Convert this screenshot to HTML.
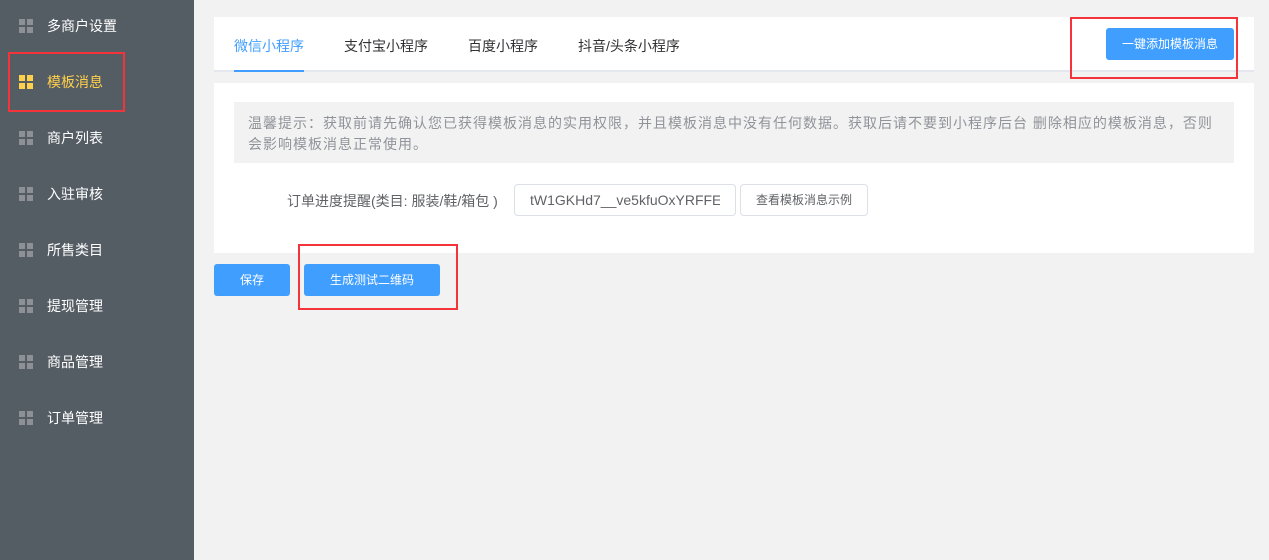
<!DOCTYPE html>
<html><head><meta charset="utf-8"><style>
*{margin:0;padding:0;box-sizing:border-box}
body{width:1269px;height:560px;background:#f2f2f2;font-family:"Liberation Sans","Noto Sans CJK SC",sans-serif;font-size:14px;position:relative;overflow:hidden}
.side{position:absolute;left:0;top:0;width:194px;height:560px;background:#545c64}
.item{position:absolute;left:0;width:194px;height:56px;color:#fff;font-size:14px;line-height:56px;padding-left:47px}
.ic{position:absolute;left:19px;top:21px;width:14px;height:14px}
.ic i{position:absolute;width:6px;height:6px;background:#8d9197}
.item.on{color:#ffd04b}.item.on .ic i{background:#ffd04b}
.a{position:absolute;white-space:nowrap}
.red{position:absolute;border:2px solid #f5333a}
.btn{position:absolute;background:#409eff;color:#fff;border-radius:3px;text-align:center;font-size:12px}
</style></head><body>
<div class="side">
<div class="item" style="top:-2px"><span class="ic"><i style="left:0;top:0"></i><i style="left:8px;top:0"></i><i style="left:0;top:8px"></i><i style="left:8px;top:8px"></i></span>多商户设置</div>
<div class="item on" style="top:54px"><span class="ic"><i style="left:0;top:0"></i><i style="left:8px;top:0"></i><i style="left:0;top:8px"></i><i style="left:8px;top:8px"></i></span>模板消息</div>
<div class="item" style="top:110px"><span class="ic"><i style="left:0;top:0"></i><i style="left:8px;top:0"></i><i style="left:0;top:8px"></i><i style="left:8px;top:8px"></i></span>商户列表</div>
<div class="item" style="top:166px"><span class="ic"><i style="left:0;top:0"></i><i style="left:8px;top:0"></i><i style="left:0;top:8px"></i><i style="left:8px;top:8px"></i></span>入驻审核</div>
<div class="item" style="top:222px"><span class="ic"><i style="left:0;top:0"></i><i style="left:8px;top:0"></i><i style="left:0;top:8px"></i><i style="left:8px;top:8px"></i></span>所售类目</div>
<div class="item" style="top:278px"><span class="ic"><i style="left:0;top:0"></i><i style="left:8px;top:0"></i><i style="left:0;top:8px"></i><i style="left:8px;top:8px"></i></span>提现管理</div>
<div class="item" style="top:334px"><span class="ic"><i style="left:0;top:0"></i><i style="left:8px;top:0"></i><i style="left:0;top:8px"></i><i style="left:8px;top:8px"></i></span>商品管理</div>
<div class="item" style="top:390px"><span class="ic"><i style="left:0;top:0"></i><i style="left:8px;top:0"></i><i style="left:0;top:8px"></i><i style="left:8px;top:8px"></i></span>订单管理</div>
</div>
<div class="red" style="left:8px;top:52px;width:117px;height:60px"></div>

<div class="a" style="left:214px;top:17px;width:1040px;height:55px;background:#fff;border-bottom:2px solid #e4e7ed"></div>
<div class="a" style="left:234px;top:36px;color:#409eff">微信小程序</div>
<div class="a" style="left:234px;top:70px;width:70px;height:2px;background:#409eff"></div>
<div class="a" style="left:344px;top:36px;color:#303133">支付宝小程序</div>
<div class="a" style="left:468px;top:36px;color:#303133">百度小程序</div>
<div class="a" style="left:578px;top:36px;color:#303133">抖音/头条小程序</div>
<div class="btn" style="left:1106px;top:28px;width:128px;height:32px;line-height:32px">一键添加模板消息</div>
<div class="red" style="left:1070px;top:17px;width:168px;height:62px"></div>

<div class="a" style="left:214px;top:83px;width:1040px;height:170px;background:#fff"></div>
<div class="a" style="left:234px;top:102px;width:1000px;height:61px;background:#f2f2f2;color:#909399;padding:11px 14px;line-height:21px;font-size:14px;letter-spacing:1px">温馨提示：获取前请先确认您已获得模板消息的实用权限，并且模板消息中没有任何数据。获取后请不要到小程序后台 删除相应的模板消息，否则<br>会影响模板消息正常使用。</div>
<div class="a" style="left:287px;top:191px;color:#606266">订单进度提醒(类目: 服装/鞋/箱包 )</div>
<div class="a" style="left:514px;top:184px;width:222px;height:32px;border:1px solid #dcdfe6;border-radius:4px;color:#606266;line-height:30px;padding:0 15px;overflow:hidden"><div style="width:190px;overflow:hidden">tW1GKHd7__ve5kfuOxYRFFE5C</div></div>
<div class="a" style="left:740px;top:184px;width:128px;height:32px;border:1px solid #dcdfe6;border-radius:4px;color:#606266;line-height:30px;text-align:center;font-size:12px">查看模板消息示例</div>

<div class="btn" style="left:214px;top:264px;width:76px;height:32px;line-height:32px">保存</div>
<div class="btn" style="left:304px;top:264px;width:136px;height:32px;line-height:32px">生成测试二维码</div>
<div class="red" style="left:298px;top:244px;width:160px;height:66px"></div>
</body></html>
